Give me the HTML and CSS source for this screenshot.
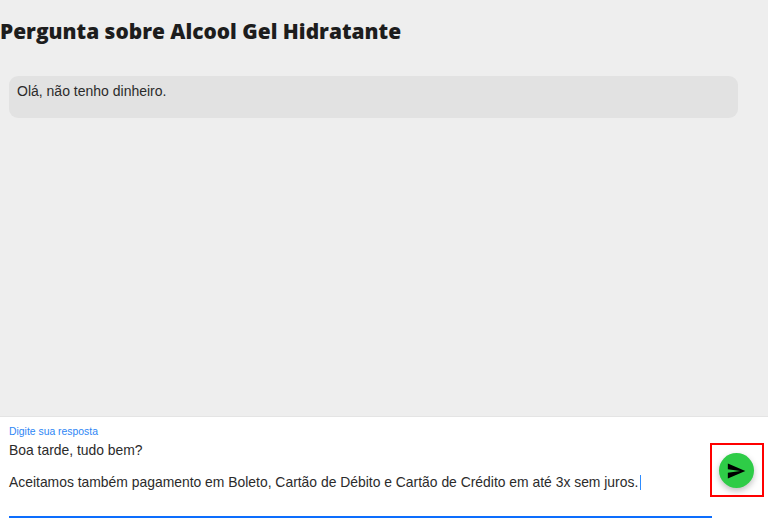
FILE: index.html
```html
<!DOCTYPE html>
<html lang="pt">
<head>
<meta charset="utf-8">
<title>Pergunta</title>
<link rel="stylesheet" href="styles.css">
</head>
<body>
<main class="thread">
  <h1 class="title">Pergunta sobre Alcool Gel Hidratante</h1>
  <div class="bubble">Olá, não tenho dinheiro.</div>
</main>
<form class="composer">
  <div class="field">
    <label class="label">Digite sua resposta</label>
    <div class="input">
      <p class="line">Boa tarde, tudo bem?</p>
      <p class="line">Aceitamos também pagamento em Boleto, Cartão de Débito e Cartão de Crédito em até 3x sem juros.<span class="caret"></span></p>
    </div>
  </div>
  <div class="send-box">
    <button class="send" type="button" aria-label="Enviar">
      <svg class="send-icon" viewBox="1 0 24 24"><path d="M2.01 21 23 12 2.01 3 2 10l15 2-15 2z"/></svg>
    </button>
  </div>
</form>
</body>
</html>
```
FILE: styles.css
```css
html, body {
  margin: 0;
  height: 100%;
}
body {
  width: 768px;
  height: 527px;
  overflow: hidden;
  display: flex;
  flex-direction: column;
  background: #fff;
  font-family: "Liberation Sans", Arial, sans-serif;
  color: #2b2b2b;
}
.thread {
  flex: 1;
  background: #eeeeee;
  border-bottom: 1px solid #e4e4e4;
  padding: 0 30px 0 0;
}
.title {
  margin: 0;
  padding-top: 16px;
  font-family: "Open Sans", sans-serif;
  font-size: 20.9px;
  font-weight: 800;
  line-height: 30px;
  color: #1d1d1d;
}
.bubble {
  margin: 30px 0 0 9px;
  height: 42px;
  padding: 7px 8px 0;
  box-sizing: border-box;
  background: #e2e2e2;
  border-radius: 9px;
  font-size: 14px;
  line-height: 17px;
}
.composer {
  height: 110px;
  display: flex;
  padding: 0 4px 0 9px;
  box-sizing: border-box;
}
.field {
  flex: 0 0 703px;
  height: 101px;
  box-sizing: border-box;
  border-bottom: 2px solid #0d6efd;
  padding-top: 9px;
}
.label {
  display: block;
  font-size: 10.4px;
  line-height: 12px;
  color: #2d86f5;
}
.input {
  margin-top: 4px;
  font-size: 13.9px;
  line-height: 17px;
}
.line {
  margin: 0 0 15px;
}
.caret {
  display: inline-block;
  width: 1px;
  height: 15px;
  margin: 1px 0 0 2px;
  vertical-align: top;
  background: #2d8cff;
}
.send-box {
  margin: 26px 0 0 -2px;
  flex: 0 0 54px;
  height: 54px;
  box-sizing: border-box;
  border: 2px solid #f00;
  padding: 1px 1px 0 0;
  display: flex;
  align-items: center;
  justify-content: center;
}
.send {
  flex: none;
  width: 35px;
  height: 35px;
  padding: 0;
  border: 0;
  border-radius: 50%;
  background: #2ecc47;
  box-shadow: 0 3px 6px rgba(0, 0, 0, .25);
  display: flex;
  align-items: center;
  justify-content: center;
}
.send-icon {
  width: 20px;
  height: 20px;
  fill: #000;
}
```
